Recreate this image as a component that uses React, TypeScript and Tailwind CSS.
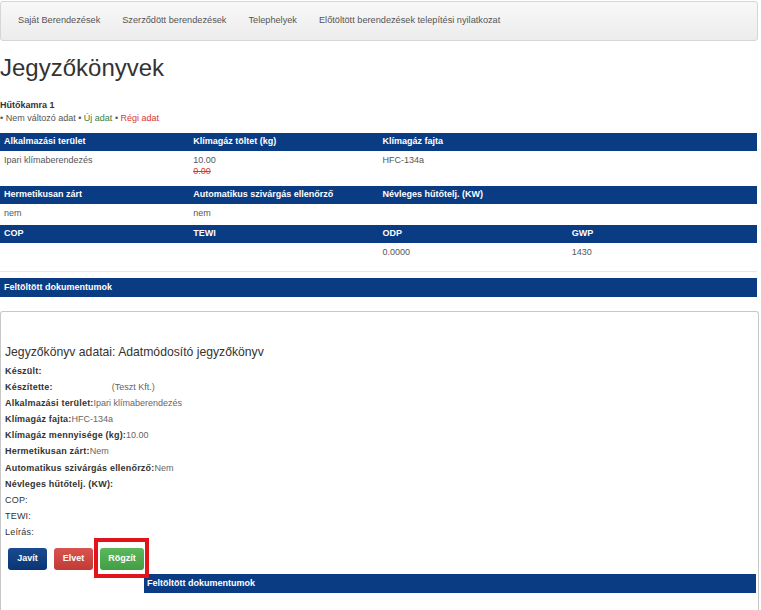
import React from 'react';

const font = { fontFamily: '"Liberation Sans", Arial, sans-serif' };

function HeaderBar({ cells }: { cells: string[] }) {
  return (
    <div className="grid h-[18px] grid-cols-4 items-center bg-[#0a3c84] text-[9px] font-bold text-white">
      {cells.map((c, i) => (
        <div key={i} className="pl-[4px]">
          {c}
        </div>
      ))}
    </div>
  );
}

function DataRow({ cells, height }: { cells: React.ReactNode[]; height: string }) {
  return (
    <div className={`grid grid-cols-4 pt-[4px] text-[9px] leading-[11px] text-[#555] ${height}`}>
      {cells.map((c, i) => (
        <div key={i} className="pl-[4px]">
          {c}
        </div>
      ))}
    </div>
  );
}

const details: [string, string, boolean][] = [
  ['Készült:', '', true],
  ['Készítette:', '', true],
  ['Alkalmazási terület:', 'Ipari klímaberendezés', true],
  ['Klímagáz fajta:', 'HFC-134a', true],
  ['Klímagáz mennyisége (kg):', '10.00', true],
  ['Hermetikusan zárt:', 'Nem', true],
  ['Automatikus szivárgás ellenőrző:', 'Nem', true],
  ['Névleges hűtőtelj. (KW):', '', true],
  ['COP:', '', false],
  ['TEWI:', '', false],
  ['Leírás:', '', false],
];

export default function App() {
  return (
    <div className="min-h-[610px] w-[761px] overflow-hidden bg-white" style={font}>
      {/* top nav */}
      <nav className="mt-[1px] flex h-[40px] w-[758px] items-center rounded-[3px] border border-[#d6d6d6] bg-gradient-to-b from-[#f8f8f8] to-[#ececec] pl-[6px] text-[9.2px] text-[#555]">
        <span className="px-[11px]">Saját Berendezések</span>
        <span className="px-[11px]">Szerződött berendezések</span>
        <span className="px-[11px]">Telephelyek</span>
        <span className="px-[11px]">Előtöltött berendezések telepítési nyilatkozat</span>
      </nav>

      <h1 className="mt-[14px] text-[24px] leading-[26px] text-[#333]">Jegyzőkönyvek</h1>

      <div className="mt-[18px] text-[9px] leading-[13px]">
        <div className="font-bold text-[#333]">Hűtőkamra 1</div>
        <div className="text-[#555]">
          • Nem változó adat • <span className="text-[#3c7d3c]">Új adat</span> •{' '}
          <span className="text-[#d9362f]">Régi adat</span>
        </div>
      </div>

      <div className="mt-[8px] w-[757px]">
        <HeaderBar cells={['Alkalmazási terület', 'Klímagáz töltet (kg)', 'Klímagáz fajta', '']} />
        <DataRow
          height="h-[35px]"
          cells={[
            'Ipari klímaberendezés',
            <>
              <div>10.00</div>
              <div className="text-[#d9362f] line-through">0.00</div>
            </>,
            'HFC-134a',
            '',
          ]}
        />
        <HeaderBar cells={['Hermetikusan zárt', 'Automatikus szivárgás ellenőrző', 'Névleges hűtőtelj. (KW)', '']} />
        <DataRow height="h-[21px]" cells={['nem', 'nem', '', '']} />
        <HeaderBar cells={['COP', 'TEWI', 'ODP', 'GWP']} />
        <DataRow height="h-[29px] border-b border-[#e3e9f0]" cells={['', '', '0.0000', '1430']} />
        <div className="mt-[6px] flex h-[19px] items-center bg-[#0a3c84] pl-[4px] text-[9px] font-bold text-white">
          Feltöltött dokumentumok
        </div>
      </div>

      {/* detail panel */}
      <div className="mt-[14px] h-[300px] w-[759px] rounded-t-[3px] border border-b-0 border-[#c8c8c8] pt-[32px]">
        <h4 className="pl-[4px] text-[12.2px] leading-[16px] text-[#333]">
          Jegyzőkönyv adatai: Adatmódosító jegyzőkönyv
        </h4>
        <div className="mt-[3px] pl-[4px] text-[9px] leading-[16.1px]">
          {details.map(([label, value, bold]) => (
            <div key={label} className="flex">
              <span className={`${bold ? 'font-bold' : ''} text-[#333] tracking-[0.2px]`}>{label}</span>
              {label === 'Készítette:' ? (
                <span className="pl-[59px] text-[#666]">(Teszt Kft.)</span>
              ) : (
                <span className="text-[#666]">{value}</span>
              )}
            </div>
          ))}
        </div>

        <div className="relative mt-[8px] flex gap-[7px] pl-[7px]">
          <button className="h-[22px] w-[39px] rounded-[3px] bg-gradient-to-b from-[#1a4b90] to-[#0a3574] text-[9px] font-bold text-white">
            Javít
          </button>
          <button className="h-[22px] w-[39px] rounded-[3px] bg-gradient-to-b from-[#d9534f] to-[#c13b36] text-[9px] font-bold text-white">
            Elvet
          </button>
          <button className="h-[22px] w-[44px] rounded-[3px] bg-gradient-to-b from-[#5cb85c] to-[#449d44] text-[9px] font-bold text-white">
            Rögzít
          </button>
          {/* annotation box */}
          <div className="absolute left-[93px] top-[-10px] h-[40px] w-[55px] border-[4px] border-[#e3131b]" />
        </div>

        <div className="ml-[143px] mt-[4px] flex h-[19px] w-[612px] items-center bg-[#0a3c84] pl-[3px] text-[9px] font-bold text-white">
          Feltöltött dokumentumok
        </div>
      </div>
    </div>
  );
}
